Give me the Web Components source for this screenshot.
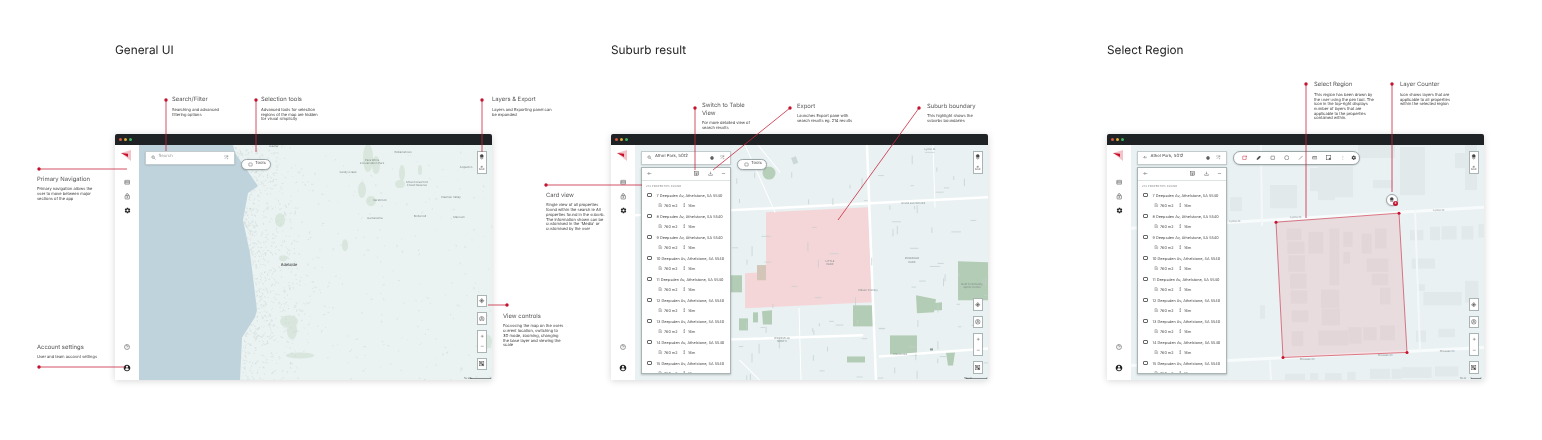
<!DOCTYPE html>
<html lang="en">
<head>
<meta charset="utf-8">
<title>Map UI annotations</title>
<style>
    html, body { margin: 0; background: #fff; font-family: Inter, "Liberation Sans", sans-serif; color: #333; }
    flow-board { height: 440px; }
</style>
</head>
<body>
<flow-board>
    <flow-section heading="General UI">
        <app-window>
            <map-stage kind="region">
                <search-box slot="left" placeholder="Search"></search-box>
                <tools-pill slot="top"></tools-pill>
            </map-stage>
        </app-window>
        <lead-line points="51,100 51,151"></lead-line>
        <lead-line points="141,100 141,152"></lead-line>
        <lead-line points="367,100 367,152"></lead-line>
        <lead-line points="-76,169 12,169"></lead-line>
        <lead-line points="-76,367 10,367"></lead-line>
        <lead-line points="392,305 373,305"></lead-line>
        <call-out heading="Search/Filter" style="left:57px;top:96px">Searching and advanced<br>filtering options</call-out>
        <call-out heading="Selection tools" style="left:146px;top:96px">Advanced tools for selection<br>regions of the map are hidden<br>for visual simplicity</call-out>
        <call-out heading="Layers &amp; Export" style="left:377px;top:96px">Layers and Exporting panel can<br>be expanded</call-out>
        <call-out heading="Primary Navigation" style="left:-78px;top:175.5px">Primary navigation allows the<br>user to move between major<br>sections of the app</call-out>
        <call-out heading="Account settings" style="left:-78px;top:343.5px">User and team account settings</call-out>
        <call-out heading="View controls" style="left:388px;top:312.5px">Focussing the map on the users<br>current location, switching to<br>3D mode, zooming, changing<br>the base layer and viewing the<br>scale</call-out>
    </flow-section>

    <flow-section heading="Suburb result">
        <app-window>
            <map-stage kind="suburb">
                <search-box slot="left" value="Athol Park, 5012"></search-box>
                <result-panel slot="left"></result-panel>
                <tools-pill slot="top"></tools-pill>
            </map-stage>
        </app-window>
        <lead-line points="84,108 84,170"></lead-line>
        <lead-line points="179,108 102,170"></lead-line>
        <lead-line points="308,108 227,220"></lead-line>
        <lead-line points="-65,185 31,185"></lead-line>
        <call-out heading="Switch to Table&lt;br&gt;View" style="left:91px;top:102.3px">For more detailed view of<br>search results</call-out>
        <call-out heading="Export" style="left:186px;top:102.5px">Launches Export pane with<br>search results eg. 214 results</call-out>
        <call-out heading="Suburb boundary" style="left:316px;top:102.5px">This highlight shows the<br>suburbs boundaries</call-out>
        <call-out heading="Card view" style="left:-65px;top:191.5px">Single view of all properties<br>found within the search ie All<br>properties found in the suburb.<br>The information shown can be<br>customised in the 'Media' or<br>customised by the user</call-out>
    </flow-section>

    <flow-section heading="Select Region">
        <app-window>
            <map-stage kind="parcels">
                <search-box slot="left" value="Athol Park, 5012" back></search-box>
                <result-panel slot="left"></result-panel>
                <draw-toolbar slot="top"></draw-toolbar>
                <layer-counter slot="float" count="3"></layer-counter>
            </map-stage>
        </app-window>
        <lead-line points="199,84 199,218"></lead-line>
        <lead-line points="285,84 285,192"></lead-line>
        <call-out heading="Select Region" style="left:207px;top:81px">This region has been drawn by<br>the user using the pen tool. The<br>icon in the top-right displays<br>number of layers that are<br>applicable to the properties<br>contained within.</call-out>
        <call-out heading="Layer Counter" style="left:293px;top:81px">Icon shows layers that are<br>applicable to all properties<br>within the selected region</call-out>
    </flow-section>
</flow-board>

<script>
const ICONS = {
    search: '<circle cx="10" cy="10" r="6"/><path d="M15 15l6 6"/>',
    back: '<path d="M21 12H4M11 5l-7 7 7 7"/>',
    share: '<path d="M4 20L20 4M12 4h8v8M4 9V4h4M20 16v4h-5"/>',
    clear: '<circle cx="12" cy="12" r="10" fill="currentColor" stroke="none"/><path d="M8 8l8 8M16 8l-8 8" stroke="#fff"/>',
    select: '<rect x="3" y="5" width="15" height="15" rx="1"/><path d="M21 3v5M18.500 5.500h5"/>',
    table: '<rect x="3" y="3" width="18" height="18"/><path d="M3 9h18M3 15h18M12 9v12"/>',
    download: '<path d="M3 15v6h18v-6M12 3v12M8 11l4 4 4-4"/>',
    upload: '<path d="M3 13v8h18v-8M8 13h-2M18 13h-2M12 16V4M8 8l4-4 4 4"/>',
    minus: '<path d="M4 12h16"/>',
    plus: '<path d="M4 12h16M12 4v16"/>',
    square: '<rect x="4" y="5" width="16" height="14" rx="2"/>',
    area: '<path d="M5 3h10l4 4v14H5z"/><path d="M9 9h5M9 13h6M9 17h6"/>',
    height: '<path d="M12 3v18M8 6l4-3 4 3M8 18l4 3 4-3"/>',
    menu: '<rect x="3" y="5" width="18" height="14" rx="1"/><path d="M3 10h18M3 14h18"/>',
    lock: '<rect x="4" y="9" width="16" height="13" rx="2"/><path d="M8 9V6a4 4 0 0 1 8 0v3"/><circle cx="12" cy="15" r="2"/>',
    help: '<circle cx="12" cy="12" r="10"/><path d="M9 9.500a3 3 0 1 1 4.500 2.600c-1 .6-1.500 1.200-1.500 2.400M12 17.500v.5"/>',
    layers: '<path fill="currentColor" d="M12 2a7 7 0 0 1 7 7c0 2-1.500 4-7 5-5.500-1-7-3-7-5a7 7 0 0 1 7-7z"/><path d="M5 14l7 4 7-4M5 18l7 4 7-4"/>',
    target: '<circle cx="12" cy="12" r="7"/><circle cx="12" cy="12" r="3" fill="currentColor"/><path d="M12 1v4M12 19v4M1 12h4M19 12h4"/>',
    cube: '<circle cx="12" cy="12" r="10"/><circle cx="12" cy="9" r="3"/><path d="M5 19c1-4 4-5 7-5s6 1 7 5"/>',
    basemap: '<rect x="3" y="3" width="18" height="18"/><path fill="currentColor" d="M6 6h5v5H6zM13 13h5v5h-5z"/><path d="M13 8h5M6 15h5"/>',
    pen: '<path d="M4 20l2-6L16 4l4 4-10 10z" fill="currentColor"/>',
    circle: '<circle cx="12" cy="12" r="9"/>',
    slash: '<path d="M4 20L20 4"/>',
    ruler: '<rect x="2" y="7" width="20" height="10" rx="1"/><path d="M6 7v4M10 7v4M14 7v4M18 7v4"/>',
    frame: '<rect x="3" y="3" width="18" height="18"/><path d="M14 21v-7h7" fill="currentColor"/>',
    more: '<path d="M12 4v2M12 11v2M12 18v2"/>',
    gear: '<path fill="currentColor" stroke="none" d="M19.140 12.940c.04-.3.06-.61.06-.94 0-.32-.02-.64-.07-.94l2.030-1.580c.18-.14.23-.41.12-.61l-1.920-3.320c-.12-.22-.37-.29-.59-.22l-2.390.96c-.5-.38-1.030-.7-1.620-.94l-.36-2.540c-.04-.24-.24-.41-.48-.41h-3.840c-.24 0-.43.17-.47.41l-.36 2.540c-.59.24-1.130.57-1.620.94l-2.390-.96c-.22-.08-.47 0-.59.22L2.740 8.870c-.12.21-.08.47.12.61l2.030 1.580c-.05.3-.09.63-.09.94s.02.64.07.94l-2.030 1.580c-.18.14-.23.41-.12.61l1.920 3.320c.12.22.37.29.59.22l2.390-.96c.5.38 1.030.7 1.620.94l.36 2.540c.05.24.24.41.48.41h3.840c.24 0 .44-.17.47-.41l.36-2.540c.59-.24 1.130-.56 1.620-.94l2.390.96c.22.08.47 0 .59-.22l1.920-3.320c.12-.22.07-.47-.12-.61l-2.010-1.580zM12 15.600c-1.980 0-3.600-1.620-3.600-3.600s1.620-3.600 3.600-3.600 3.600 1.620 3.600 3.600-1.620 3.600-3.600 3.600z"/>',
    user: '<path fill="currentColor" stroke="none" d="M12 2C6.480 2 2 6.480 2 12s4.480 10 10 10 10-4.480 10-10S17.520 2 12 2zm0 3c1.660 0 3 1.340 3 3s-1.340 3-3 3-3-1.340-3-3 1.340-3 3-3zm0 14.200c-2.500 0-4.710-1.280-6-3.220.03-1.990 4-3.080 6-3.080 1.990 0 5.970 1.090 6 3.080-1.290 1.940-3.500 3.220-6 3.220z"/>'
};

class UiIcon extends HTMLElement {
    connectedCallback() {
        const size = this.getAttribute('size') || 6;
        const color = this.getAttribute('color') || 'currentColor';
        this.attachShadow({ mode: 'open' }).innerHTML = `
            <style>
                :host { display: inline-flex; flex: none; color: ${color}; width: ${size}px; height: ${size}px; }
                svg { width: 100%; height: 100%; fill: none; stroke: currentColor; stroke-width: 2; }
            </style>
            <svg viewBox="0 0 24 24">${ICONS[this.getAttribute('name')] || ''}</svg>
        `;
    }
}

class FlowBoard extends HTMLElement {
    connectedCallback() {
        this.attachShadow({ mode: 'open' }).innerHTML = `
            <style>
                /* the reference is a soft, scaled down capture */
                :host { display: grid; grid-template-columns: repeat(3, 377px); column-gap: 119px; padding-left: 115px; overflow: hidden; filter: blur(.3px); text-rendering: geometricPrecision; }
            </style>
            <slot></slot>
        `;
    }
}

class FlowSection extends HTMLElement {
    connectedCallback() {
        this.attachShadow({ mode: 'open' }).innerHTML = `
            <style>
                :host { display: block; position: relative; padding-top: 42px; }
                h2 { margin: 0 0 76px; font: 400 11.800px/16px Inter, sans-serif; color: #222; }
            </style>
            <h2>${this.getAttribute('heading')}</h2>
            <slot></slot>
        `;
    }
}

// annotation copy, placed on the free canvas of the diagram
class CallOut extends HTMLElement {
    connectedCallback() {
        this.attachShadow({ mode: 'open' }).innerHTML = `
            <style>
                :host { position: absolute; display: block; white-space: nowrap; z-index: 3; font: 400 4px/4.700px Inter, sans-serif; color: #3a3a3a; }
                h3 { margin: 0 0 4.600px; font: 400 5.900px/7.300px Inter, sans-serif; color: #555; }
            </style>
            <h3>${this.getAttribute('heading')}</h3>
            <slot></slot>
        `;
    }
}

class LeadLine extends HTMLElement {
    connectedCallback() {
        const [[x1, y1], [x2, y2]] = this.getAttribute('points').split(' ').map(p => p.split(','));
        this.attachShadow({ mode: 'open' }).innerHTML = `
            <style>
                :host { position: absolute; left: 0; top: 0; width: 0; height: 0; z-index: 4; }
                svg { position: absolute; left: 0; top: 0; width: 1px; height: 1px; overflow: visible; }
            </style>
            <svg>
                <line x1="${x1}" y1="${y1}" x2="${x2}" y2="${y2}" stroke="#c9263c" stroke-width=".8"/>
                <circle cx="${x1}" cy="${y1}" r="1.700" fill="#c4122f"/>
            </svg>
        `;
    }
}

class AppWindow extends HTMLElement {
    connectedCallback() {
        this.attachShadow({ mode: 'open' }).innerHTML = `
            <style>
                :host { display: flex; flex-direction: column; height: 246px; background: #fff; border-radius: 2px 2px 0 0; box-shadow: 0 1px 7px rgba(0,0,0,.16); }
                .bar { height: 10.500px; flex: none; display: flex; align-items: center; gap: 2px; padding-left: 3.500px; background: #1f2224; border-radius: 2px 2px 0 0; }
                .bar i { width: 3px; height: 3px; border-radius: 50%; }
                .body { flex: 1; display: flex; min-height: 0; }
                nav { width: 24px; flex: none; display: flex; flex-direction: column; align-items: center; color: #222; padding: 5.500px 0 8px; box-sizing: border-box; }
                .logo { width: 12px; height: 11px; margin-left: -2px; }
                .links { display: flex; flex-direction: column; gap: 7.500px; margin-top: 18px; align-items: center; }
                .foot { margin-top: auto; display: flex; flex-direction: column; align-items: center; gap: 14px; }
                main { flex: 1; min-width: 0; display: flex; }
            </style>
            <div class="bar"><i style="background:#d9573f"></i><i style="background:#e0ad32"></i><i style="background:#3fb35f"></i></div>
            <div class="body">
                <nav>
                    <svg class="logo" viewBox="0 0 12 11">
                        <polygon points="1,3 11,0 11,11" fill="#f3c3c7"/>
                        <polygon points="1,3 8,3.800 8,7" fill="#c8102e"/>
                    </svg>
                    <div class="links">
                        <ui-icon name="menu" size="6.500" color="#555"></ui-icon>
                        <ui-icon name="lock" size="6.500" color="#444"></ui-icon>
                        <ui-icon name="gear" size="7"></ui-icon>
                    </div>
                    <div class="foot">
                        <ui-icon name="help" size="6" color="#444"></ui-icon>
                        <ui-icon name="user" size="8"></ui-icon>
                    </div>
                </nav>
                <main><slot></slot></main>
            </div>
        `;
    }
}

// small repeatable random, so that the map marks stay in one place
function seeded(seed) {
    return () => (seed = (seed * 16807) % 2147483647) / 2147483647;
}

const COAST = [[145,233],[153,235],[170,247],[186,258],[193,248],[220,243],[253,250],[285,254],[310,257],[317,255],[337,242],[380,240]];

function coastAt(y) {
    for (let i = 1; i < COAST.length; i++) {
        if (y <= COAST[i][0]) {
            const [y0, x0] = COAST[i - 1], [y1, x1] = COAST[i];
            return x0 + (x1 - x0) * (y - y0) / (y1 - y0);
        }
    }
    return 240;
}

function regionMap() {
    const rnd = seeded(4711);
    let marks = '';
    for (let i = 0; i < 950; i++) {
        const y = 145 + rnd() * 235;
        const near = rnd() < .72;
        const x = near ? coastAt(y) + 1 + rnd() * rnd() * 75 : coastAt(y) + rnd() * (492 - coastAt(y));
        const a = rnd() * 6.280, l = .6 + rnd() * 2;
        marks += `M${x.toFixed(1)} ${y.toFixed(1)}l${(Math.cos(a) * l).toFixed(1)} ${(Math.sin(a) * l).toFixed(1)}`;
    }
    const green = [[289,321,9,6],[292,330,5,9],[283,258,4,3],[368,158,5,14],[376,165,4,9],[400,184,5,4],[402,173,3,8],[362,190,4,8],[371,201,5,5],[420,170,2,5],[345,245,3,6],[280,220,5,7],[300,355,14,3],[487,341,5,7]];
    return `
        <rect x="139" y="145" width="353" height="235" fill="#eaf2f2"/>
        <path d="M139 145H233L235 153 247 170 258 186 248 193 243 220 250 253 254 285 257 310 255 317 242 337 240 380H139Z" fill="#bfd3dc"/>
        ${green.map(g => `<ellipse cx="${g[0]}" cy="${g[1]}" rx="${g[2]}" ry="${g[3]}" fill="#d8e6dd"/>`).join('')}
        <path d="${marks}" stroke="#c4d2cd" stroke-width=".45" fill="none"/>
        <g font-family="Inter, sans-serif" font-size="2.800" fill="#7a8783" text-anchor="middle">
            <text x="289" y="266" font-size="4" fill="#333">Adelaide</text>
            <text x="403" y="153">Williamstown</text>
            <text x="372" y="161">Para Wirra</text>
            <text x="372" y="164">Conservation Park</text>
            <text x="417" y="183">Mount Crawford</text>
            <text x="417" y="186">Forest Reserve</text>
            <text x="348" y="173">Sandy Creek</text>
            <text x="451" y="198">Flaxman Valley</text>
            <text x="466" y="168">Angaston</text>
            <text x="380" y="201">Kersbrook</text>
            <text x="420" y="217">Birdwood</text>
            <text x="459" y="218">Mannum</text>
            <text x="375" y="219">Gumeracha</text>
            <text x="274" y="147">Gawler</text>
        </g>
        <text x="464" y="379" font-size="2.500" fill="#555" font-family="Inter, sans-serif">50 km</text>
        <path d="M470 377v1h21v-1" stroke="#444" stroke-width=".6" fill="none"/>
    `;
}

function suburbMap() {
    const rnd = seeded(90210);
    let marks = '';
    for (let i = 0; i < 90; i++) {
        const x = 730 + rnd() * 258, y = 150 + rnd() * 228, tall = rnd() < .55;
        marks += `M${x.toFixed(1)} ${y.toFixed(1)}${tall ? 'v' + (3 + rnd() * 7).toFixed(1) : 'h' + (3 + rnd() * 7).toFixed(1)}`;
    }
    const green = [
        '958,261 989,262 989,300 958,300', '916,295 936,299 934,312 917,313', '853,305 873,305 873,326 853,326',
        '890,335 917,335 917,355 890,355', '847,356 865,356 865,362 847,362', '946,352 955,352 953,365 948,365',
        '730,275 742,275 742,292 730,292', '757,265 766,265 766,280 757,280', '739,318 748,318 748,330 739,330',
        '753,312 758,312 758,322 753,322', '762,311 772,310 772,324 763,324', '932,303 942,302 942,310 933,310'
    ];
    return `
        <rect x="635" y="145" width="353" height="235" fill="#e9f1f2"/>
        <circle cx="769" cy="173" r="6.500" fill="#b6cfb8"/>
        ${green.map(p => `<polygon points="${p}" fill="#b3ccb5"/>`).join('')}
        <polygon points="766,212 868,207 872,302 745,308 745,273 766,272" fill="#f5d6d8"/>
        <rect x="757" y="265" width="9" height="15" fill="#d3c6b8"/>
        <g stroke="#fff" fill="none" stroke-linecap="square">
            <path d="M635 215L989 197M867 145L876 380M880 356L989 348M730 339L862 335" stroke-width="2.500"/>
            <path d="M745 145L775 212M758 145L780 172M799 308L801 380M740 360L760 380M933 145L935 207" stroke-width="1"/>
        </g>
        <path d="${marks}" stroke="#c4cfcf" stroke-width=".7" fill="none"/>
        <rect x="792" y="157" width="5" height="7" transform="rotate(-20 794 160)" fill="#ccd8d5"/>
        <rect x="930" y="348" width="3" height="2" fill="#8c9995"/>
        <g font-family="Inter, sans-serif" font-size="2.700" fill="#7b8886" text-anchor="middle">
            <text x="930" y="150">Lyons St</text>
            <text x="913" y="204">Grand Junction Rd</text>
            <text x="830" y="262">LITTLE</text>
            <text x="830" y="265">PARK</text>
            <text x="782" y="339">WOODVILLE</text>
            <text x="782" y="342">NORTH</text>
            <text x="912" y="259">ROSEFIELD</text>
            <text x="912" y="263">PARK</text>
            <text x="868" y="291">Kilburn Primary</text>
            <text x="972" y="285">Deaf Community</text>
            <text x="972" y="288">Sports Centre</text>
            <text x="900" y="355">Hanson Rd</text>
        </g>
        <text x="964" y="379" font-size="2.500" fill="#555" font-family="Inter, sans-serif">500 m</text>
        <path d="M966 377v1h21v-1" stroke="#444" stroke-width=".6" fill="none"/>
    `;
}

function parcelMap() {
    const zoomed = [[80,55,45,35],[82,95,52,35],[85,135,50,50],[90,190,50,45],[92,240,50,40],[95,300,50,35],[95,362,35,45],[145,65,45,65],[208,55,30,170],[183,238,55,55],[185,295,55,50],[175,360,90,45],[250,65,28,45],[250,125,20,35],[265,350,40,50],[310,350,40,40],[360,345,45,45],[305,70,30,60],[345,55,35,60],[320,145,65,40],[335,190,50,35],[360,232,32,50],[450,60,40,30],[510,50,30,40],[545,48,45,40],[605,48,35,40],[655,42,30,40],[455,145,70,30],[470,222,25,20],[490,245,115,40],[615,212,40,65],[468,360,30,35],[535,355,50,25],[0,285,15,40],[75,490,60,20],[150,488,25,20],[195,488,50,22],[262,485,25,25],[330,475,60,30],[395,475,30,30],[425,470,90,32],[525,468,70,30]];
    const upper = [[1270,185,27,23],[1230,197,12,14],[1310,168,14,23],[1333,167,20,20],[1318,167,17,33],[1335,167,18,30],[1400,147,25,48],[1373,180,20,8],[1455,153,12,15],[1465,145,12,45],[1358,145,37,13]];
    const rects = zoomed.map(r => [1260 + r[0] / 3, 210 + r[1] / 3, r[2] / 3, r[3] / 3]).concat(upper);
    const fill = rects.map(r => `<rect x="${r[0]}" y="${r[1]}" width="${r[2]}" height="${r[3]}"/>`).join('');
    const corners = [[1276,222],[1399,213],[1407,352],[1283,357]];
    return `
        <rect x="1131" y="145" width="353" height="235" fill="#e9f1f3"/>
        <g fill="#e1e9eb">${fill}</g>
        <path d="M1131 228L1484 207M1131 365L1484 347" stroke="#f8fbfb" stroke-width="3" fill="none"/>
        <path d="M1261 145L1262 226M1270 360L1271 380M1415 210L1420 350" stroke="#f4f8f8" stroke-width="2" fill="none"/>
        <polygon points="${corners.join(' ')}" fill="#e9a6ad" fill-opacity=".28" stroke="#c9263c" stroke-width=".6"/>
        ${corners.map(c => `<circle cx="${c[0]}" cy="${c[1]}" r="1.500" fill="#c4122f"/>`).join('')}
        <g font-family="Inter, sans-serif" font-size="2.800" fill="#7f8b8c">
            <text x="1229" y="222">Lyons St</text>
            <text x="1290" y="218">Lyons St</text>
            <text x="1433" y="211">Lyons St</text>
            <text x="1300" y="360">Brossen Ct</text>
            <text x="1378" y="356">Brossen Ct</text>
            <text x="1440" y="352">Brossen Ct</text>
        </g>
        <text x="1460" y="379" font-size="2.500" fill="#555" font-family="Inter, sans-serif">50 m</text>
        <path d="M1471 377v1h10v-1" stroke="#444" stroke-width=".6" fill="none"/>
    `;
}

const MAPS = {
    region: ['139 145 353 235', regionMap],
    suburb: ['635 145 353 235', suburbMap],
    parcels: ['1131 145 353 235', parcelMap]
};

class MapStage extends HTMLElement {
    connectedCallback() {
        const [box, draw] = MAPS[this.getAttribute('kind')];
        this.attachShadow({ mode: 'open' }).innerHTML = `
            <style>
                :host { display: block; flex: 1; min-width: 0; position: relative; overflow: hidden; }
                svg.map { position: absolute; left: 0; top: 0; width: 100%; height: 100%; }
                .over { position: relative; height: 100%; box-sizing: border-box; padding: 6px 5px 10px 6px; display: grid; grid-template-columns: 89.500px 1fr auto; column-gap: 6px; }
                .left { display: flex; flex-direction: column; gap: 2px; }
            </style>
            <svg class="map" viewBox="${box}" preserveAspectRatio="none">${draw()}</svg>
            <div class="over">
                <div class="left"><slot name="left"></slot></div>
                <div><slot name="top"></slot></div>
                <map-controls></map-controls>
            </div>
            <slot name="float"></slot>
        `;
    }
}

class SearchBox extends HTMLElement {
    connectedCallback() {
        const value = this.getAttribute('value');
        const back = this.hasAttribute('back');
        this.attachShadow({ mode: 'open' }).innerHTML = `
            <style>
                :host { display: flex; align-items: center; height: 14px; flex: none; box-sizing: border-box; padding: 0 5px; background: #fff; border: 1px solid #c2ccce; box-shadow: 0 .5px 1.500px rgba(0,0,0,.18); font: 400 4.300px/1 Inter, sans-serif; color: #444; }
                span { margin-left: 3px; white-space: nowrap; }
                span.empty { color: #9a9a9a; margin-left: 2.500px; }
                .end { margin-left: auto; display: flex; gap: 6.500px; align-items: center; }
            </style>
            <ui-icon name="${back ? 'back' : 'search'}" size="${back ? 4.500 : 5}" color="#333"></ui-icon>
            <span class="${value ? '' : 'empty'}">${value || this.getAttribute('placeholder')}</span>
            <div class="end">
                ${value ? '<ui-icon name="clear" size="4" color="#333"></ui-icon>' : ''}
                <ui-icon name="share" size="4.500" color="#444"></ui-icon>
            </div>
        `;
    }
}

class ToolsPill extends HTMLElement {
    connectedCallback() {
        this.attachShadow({ mode: 'open' }).innerHTML = `
            <style>
                :host { display: inline-flex; align-items: center; gap: 2.500px; height: 11px; width: 30px; margin-top: 1px; box-sizing: border-box; padding-left: 6px; background: #fff; border: 1px solid #9aa6a8; border-radius: 6px; box-shadow: 0 .5px 1.500px rgba(0,0,0,.2); font: 400 4.300px/1 Inter, sans-serif; color: #444; }
            </style>
            <ui-icon name="square" size="5" color="#444"></ui-icon>Tools
        `;
    }
}

class DrawToolbar extends HTMLElement {
    connectedCallback() {
        const tools = ['select', 'pen', 'square', 'circle', 'slash', 'ruler', 'frame', 'more', 'gear'];
        this.attachShadow({ mode: 'open' }).innerHTML = `
            <style>
                :host { display: flex; align-items: center; gap: 8.500px; width: 127px; height: 14px; box-sizing: border-box; padding-left: 8px; background: #fff; border: 1px solid #9aa6a8; border-radius: 7px; box-shadow: 0 .5px 1.500px rgba(0,0,0,.2); color: #444; }
                ui-icon:last-child { margin-left: -3px; }
            </style>
            ${tools.map((t, i) => `<ui-icon name="${t}" size="5.500" color="${i ? '#3a3a3a' : '#c4122f'}"></ui-icon>`).join('')}
        `;
    }
}

class MapControls extends HTMLElement {
    connectedCallback() {
        this.attachShadow({ mode: 'open' }).innerHTML = `
            <style>
                :host { display: flex; flex-direction: column; justify-content: space-between; width: 10.500px; color: #444; }
                .group { display: flex; flex-direction: column; gap: 5px; }
                .box { display: flex; flex-direction: column; background: #fff; border: 1px solid #a9b4b5; box-sizing: border-box; }
                .box div { height: 10.500px; display: flex; align-items: center; justify-content: center; }
            </style>
            <div class="box">
                <div><ui-icon name="layers" size="5.500"></ui-icon></div>
                <div><ui-icon name="upload" size="5.500"></ui-icon></div>
            </div>
            <div class="group">
                <div class="box"><div><ui-icon name="target" size="5.500"></ui-icon></div></div>
                <div class="box"><div><ui-icon name="cube" size="5.500"></ui-icon></div></div>
                <div class="box">
                    <div><ui-icon name="plus" size="4.500"></ui-icon></div>
                    <div><ui-icon name="minus" size="4.500"></ui-icon></div>
                </div>
                <div class="box"><div><ui-icon name="basemap" size="5.500"></ui-icon></div></div>
            </div>
        `;
    }
}

class ResultCard extends HTMLElement {
    connectedCallback() {
        this.attachShadow({ mode: 'open' }).innerHTML = `
            <style>
                :host { display: block; flex: none; height: 21px; box-sizing: border-box; padding: 1.500px 0 0 5px; font: 400 3.800px/5px Inter, sans-serif; color: #484848; white-space: nowrap; }
                .title { display: flex; align-items: center; gap: 4.500px; height: 5px; }
                .check { width: 5px; height: 4px; border: 1px solid #666; border-radius: 1px; box-sizing: border-box; flex: none; }
                .meta { display: flex; align-items: center; height: 5px; margin: 5px 0 0 11px; }
                .meta span { margin-left: 1.500px; }
                .meta span.size { width: 18px; }
            </style>
            <div class="title"><i class="check"></i><slot></slot></div>
            <div class="meta">
                <ui-icon name="area" size="4.500" color="#666"></ui-icon><span class="size">760 m2</span>
                <ui-icon name="height" size="4.500" color="#333"></ui-icon><span>16m</span>
            </div>
        `;
    }
}

class ResultPanel extends HTMLElement {
    connectedCallback() {
        const cards = [7, 8, 9, 10, 11, 12, 13, 14, 15]
            .map(n => `<result-card>${n} Deepsden Av, Athelstone, SA 5540</result-card>`).join('');
        this.attachShadow({ mode: 'open' }).innerHTML = `
            <style>
                :host { display: flex; flex-direction: column; height: 207px; flex: none; overflow: hidden; background: #fff; border: 1px solid #a9b4b5; box-shadow: 0 .5px 2px rgba(0,0,0,.22); box-sizing: border-box; }
                header { height: 13px; flex: none; display: flex; align-items: center; padding: 0 4px 0 5px; border-bottom: 1px solid #dde2e3; box-sizing: border-box; color: #444; }
                header .gap { flex: 1; }
                .count { flex: none; height: 10.500px; padding-left: 4px; font: 400 2.800px/11px Inter, sans-serif; color: #888; letter-spacing: .1px; }
            </style>
            <header>
                <ui-icon name="back" size="5"></ui-icon>
                <span class="gap"></span>
                <ui-icon name="table" size="5"></ui-icon>
                <ui-icon name="download" size="5" style="margin-left:9px"></ui-icon>
                <ui-icon name="minus" size="5" style="margin-left:8px"></ui-icon>
            </header>
            <div class="count">214 PROPERTIES FOUND</div>
            ${cards}
        `;
    }
}

class LayerCounter extends HTMLElement {
    connectedCallback() {
        this.attachShadow({ mode: 'open' }).innerHTML = `
            <style>
                :host { position: absolute; left: 255px; top: 49px; width: 12px; height: 12px; box-sizing: border-box; display: flex; align-items: center; justify-content: center; background: #fff; border: 1px solid #9aa6a8; border-radius: 50%; color: #444; box-shadow: 0 .5px 1.500px rgba(0,0,0,.2); }
                b { position: absolute; right: -1px; bottom: -1px; width: 5px; height: 5px; border-radius: 50%; background: #c4122f; color: #fff; font: 700 3px/5px Inter, sans-serif; text-align: center; }
            </style>
            <ui-icon name="layers" size="5.500"></ui-icon>
            <b>${this.getAttribute('count')}</b>
        `;
    }
}

customElements.define('ui-icon', UiIcon);
customElements.define('flow-board', FlowBoard);
customElements.define('flow-section', FlowSection);
customElements.define('call-out', CallOut);
customElements.define('lead-line', LeadLine);
customElements.define('app-window', AppWindow);
customElements.define('map-stage', MapStage);
customElements.define('search-box', SearchBox);
customElements.define('tools-pill', ToolsPill);
customElements.define('draw-toolbar', DrawToolbar);
customElements.define('map-controls', MapControls);
customElements.define('result-card', ResultCard);
customElements.define('result-panel', ResultPanel);
customElements.define('layer-counter', LayerCounter);
</script>
</body>
</html>
